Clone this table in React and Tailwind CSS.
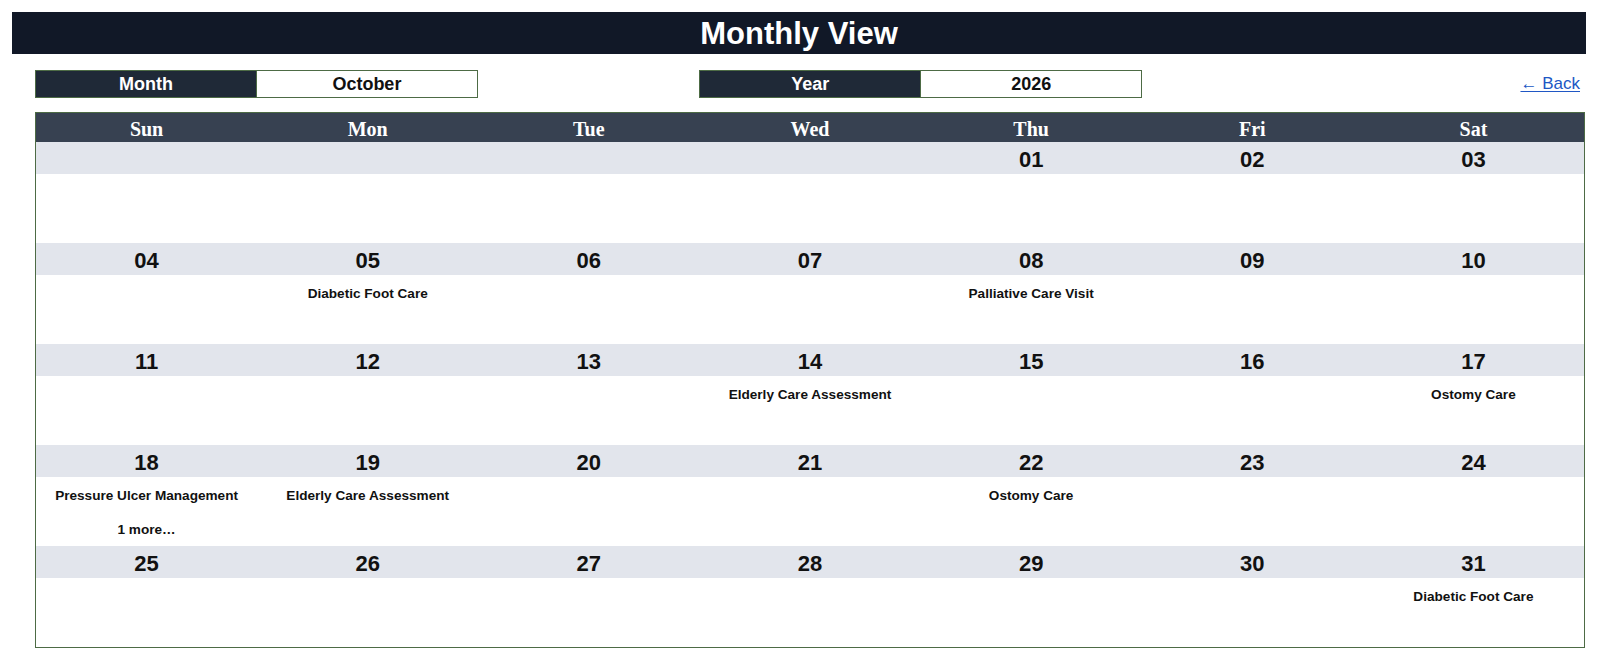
import React from "react";

const DAYS = ["Sun", "Mon", "Tue", "Wed", "Thu", "Fri", "Sat"];

// events keyed by day of month
const EVENTS = {
  5: ["Diabetic Foot Care"],
  8: ["Palliative Care Visit"],
  14: ["Elderly Care Assessment"],
  17: ["Ostomy Care"],
  18: ["Pressure Ulcer Management", "1 more…"],
  19: ["Elderly Care Assessment"],
  22: ["Ostomy Care"],
  31: ["Diabetic Foot Care"],
};

const buildWeeks = () => {
  const cells = [null, null, null, null];
  for (let d = 1; d <= 31; d++) cells.push(d);
  const weeks = [];
  for (let i = 0; i < cells.length; i += 7) weeks.push(cells.slice(i, i + 7));
  return weeks;
};

const Field = ({ label, value, className = "" }) => (
  <div className={`flex h-[28px] border border-[#4d6b45] ${className}`}>
    <div className="flex-1 flex items-center justify-center bg-[#1f2937] text-white text-[18px] font-bold border-r border-[#4d6b45]">
      {label}
    </div>
    <div className="flex-1 flex items-center justify-center bg-white text-[#111] text-[18px] font-bold">
      {value}
    </div>
  </div>
);

export default function App() {
  const weeks = buildWeeks();

  return (
    <div
      className="min-h-screen bg-white pt-3 pl-3 pr-[14px]"
      style={{ fontFamily: '"Liberation Sans", Arial, sans-serif' }}
    >
      {/* ── Title ─────────────────────────────────────────────── */}
      <div className="h-[42px] bg-[#111827] flex items-center justify-center">
        <h1 className="text-white text-[31px] font-bold leading-none">Monthly View</h1>
      </div>

      <div className="pl-[23px] pr-[1px]">
        {/* ── Controls ─────────────────────────────────────────── */}
        <div className="grid grid-cols-7 mt-4 h-[28px]">
          <Field label="Month" value="October" className="col-span-2" />
          <div />
          <Field label="Year" value="2026" className="col-span-2" />
          <div />
          <div className="flex items-center justify-end pr-[5px]">
            <a href="#" className="text-[17px] text-[#2057c4] underline underline-offset-2">
              ← Back
            </a>
          </div>
        </div>

        {/* ── Calendar ─────────────────────────────────────────── */}
        <div className="mt-[14px] border border-[#4d6b45]">
          <div className="grid grid-cols-7 h-[29px] bg-[#374151]">
            {DAYS.map((d) => (
              <div
                key={d}
                className="flex items-center justify-center pt-[1px] text-white text-[20px] font-bold"
                style={{ fontFamily: '"Liberation Serif", "Times New Roman", serif' }}
              >
                {d}
              </div>
            ))}
          </div>

          {weeks.map((week, wi) => (
            <div key={wi}>
              <div className="grid grid-cols-7 h-[32px] bg-[#e2e5ec]">
                {week.map((day, di) => (
                  <div
                    key={di}
                    className="flex items-center justify-center pt-[1px] text-[22px] font-bold text-[#111]"
                  >
                    {day ? String(day).padStart(2, "0") : ""}
                  </div>
                ))}
              </div>
              <div className="grid grid-cols-7 h-[69px] bg-white">
                {week.map((day, di) => (
                  <div key={di} className="flex flex-col pt-[2px]">
                    {(EVENTS[day] || []).map((ev) => (
                      <div
                        key={ev}
                        className="h-[34px] flex items-center justify-center text-[13.6px] font-bold text-[#111]"
                      >
                        {ev}
                      </div>
                    ))}
                  </div>
                ))}
              </div>
            </div>
          ))}
        </div>
      </div>
    </div>
  );
}
